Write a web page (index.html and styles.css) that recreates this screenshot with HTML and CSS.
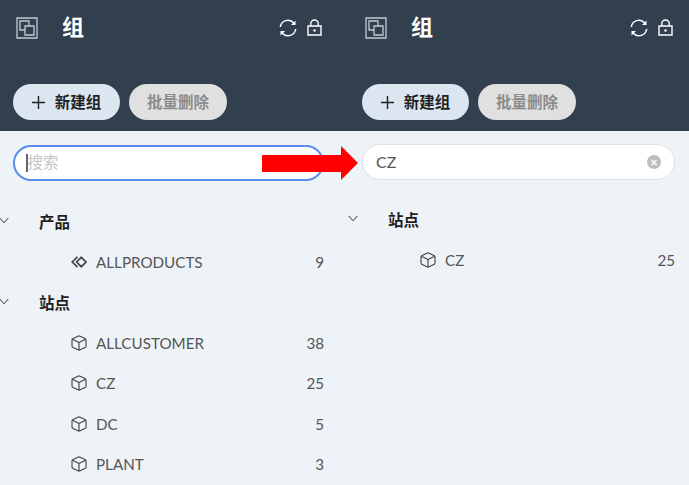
FILE: index.html
```html
<!DOCTYPE html>
<html lang="zh-cn">

<head>
    <meta charset="UTF-8">
    <title>组</title>
    <link rel="stylesheet" href="styles.css">
</head>

<body>
    <svg width="0" height="0" class="defs">
        <symbol id="box" viewBox="0 0 16 16">
            <path d="M6.900 1.200Q8 .700 9.100 1.200L13.900 3.500Q15 4 15 5.100V10.900Q15 12 13.900 12.500L9.100 14.800Q8 15.300 6.900 14.800L2.100 12.500Q1 12 1 10.900V5.100Q1 4 2.100 3.500ZM1.400 4.200 8 7.500 14.600 4.200M8 7.500V15" fill="none" stroke="currentColor" stroke-width="1.150" stroke-linejoin="round" />
        </symbol>
        <symbol id="chev" viewBox="0 0 10 7">
            <path d="M.7 1 5 5.800 9.300 1" fill="none" stroke="currentColor" stroke-width="1" />
        </symbol>
        <symbol id="logo" viewBox="0 0 22 22">
            <path d="M1 1H21V21H1Z" fill="none" stroke="currentColor" stroke-width="1.300" />
            <path d="M4 4H13V13H4Z" fill="none" stroke="currentColor" stroke-width="1.300" />
            <path d="M9 9H18V18H9Z" fill="#323f4f" stroke="currentColor" stroke-width="1.300" />
        </symbol>
        <symbol id="sync" viewBox="0 0 18 18">
            <path d="M1.300 8A7.700 7.700 0 0 1 14.800 4M16.700 10A7.700 7.700 0 0 1 3.200 14" fill="none" stroke="currentColor" stroke-width="1.500" />
            <path d="M16.500 1.500V6H12ZM1.500 16.500V12H6Z" fill="currentColor" />
        </symbol>
        <symbol id="lock" viewBox="0 0 15 17">
            <path d="M1 7H14V16H1ZM3.800 7V4.200A3.700 3.200 0 0 1 11.200 4.200V7" fill="none" stroke="currentColor" stroke-width="1.400" />
            <circle cx="7.500" cy="11.500" r="1.200" fill="currentColor" />
        </symbol>
        <symbol id="diamonds" viewBox="0 0 16 12">
            <path d="M6.500 .8 1.200 6 6.500 11.200M10.300 1.300 15 6 10.300 10.700 5.600 6Z" fill="none" stroke="currentColor" stroke-width="1.700" />
        </symbol>
        <symbol id="plus" viewBox="0 0 12 12">
            <path d="M6 0V12M0 6H12" fill="none" stroke="currentColor" stroke-width="1.300" />
        </symbol>
    </svg>

    <div class="content">
        <div class="panel panel_left">
            <div class="top">
                <div class="title_row">
                    <svg class="logo"><use href="#logo" /></svg>
                    <span class="title">组</span>
                    <svg class="sync"><use href="#sync" /></svg>
                    <svg class="lock"><use href="#lock" /></svg>
                </div>
                <div class="btn_row">
                    <button class="add_btn"><svg class="plus"><use href="#plus" /></svg>新建组</button>
                    <button class="del_btn">批量删除</button>
                </div>
            </div>
            <div class="bottom">
                <div class="search search_on">
                    <span class="caret"></span>
                    <span class="hint">搜索</span>
                </div>
                <ul class="list">
                    <li class="group">
                        <svg class="chev"><use href="#chev" /></svg>
                        <b>产品</b>
                    </li>
                    <li class="item">
                        <svg class="ico ico_small"><use href="#diamonds" /></svg>
                        <span class="name">ALLPRODUCTS</span>
                        <span class="num">9</span>
                    </li>
                    <li class="group">
                        <svg class="chev"><use href="#chev" /></svg>
                        <b>站点</b>
                    </li>
                    <li class="item">
                        <svg class="ico"><use href="#box" /></svg>
                        <span class="name">ALLCUSTOMER</span>
                        <span class="num">38</span>
                    </li>
                    <li class="item">
                        <svg class="ico"><use href="#box" /></svg>
                        <span class="name">CZ</span>
                        <span class="num">25</span>
                    </li>
                    <li class="item">
                        <svg class="ico"><use href="#box" /></svg>
                        <span class="name">DC</span>
                        <span class="num">5</span>
                    </li>
                    <li class="item">
                        <svg class="ico"><use href="#box" /></svg>
                        <span class="name">PLANT</span>
                        <span class="num">3</span>
                    </li>
                </ul>
            </div>
        </div>

        <div class="panel panel_right">
            <div class="top">
                <div class="title_row">
                    <svg class="logo"><use href="#logo" /></svg>
                    <span class="title">组</span>
                    <svg class="sync"><use href="#sync" /></svg>
                    <svg class="lock"><use href="#lock" /></svg>
                </div>
                <div class="btn_row">
                    <button class="add_btn"><svg class="plus"><use href="#plus" /></svg>新建组</button>
                    <button class="del_btn">批量删除</button>
                </div>
            </div>
            <div class="bottom">
                <div class="search">
                    <span class="value">CZ</span>
                    <span class="clear">×</span>
                </div>
                <ul class="list">
                    <li class="group">
                        <svg class="chev"><use href="#chev" /></svg>
                        <b>站点</b>
                    </li>
                    <li class="item">
                        <svg class="ico"><use href="#box" /></svg>
                        <span class="name">CZ</span>
                        <span class="num">25</span>
                    </li>
                </ul>
            </div>
        </div>

        <svg class="arrow" viewBox="0 0 97 36">
            <path d="M0 10H79V1L96 18 79 35V27H0Z" fill="#ff0000" />
        </svg>
    </div>
</body>

</html>
```

FILE: styles.css
```css
* {
    margin: 0;
    padding: 0;
    box-sizing: border-box;
    list-style: none;
}

body {
    font-family: "Lato", "Noto Sans CJK SC", sans-serif;
    background: #eef3f7;
    overflow: hidden;
}

.defs {
    display: none;
}

.content {
    position: relative;
    display: flex;
    width: 689px;
    height: 485px;
    overflow: hidden;
}

.panel {
    height: 485px;
}

.panel_left {
    width: 341px;
    --pad-left: 13px;
    --pad-right: 17px;
    --search-top: 14px;
}

.panel_right {
    width: 348px;
    --pad-left: 21px;
    --pad-right: 14px;
    --search-top: 13px;
}

.top {
    height: 131px;
    padding: 17px var(--pad-right) 0 var(--pad-left);
    background: #323f4f;
}

.title_row {
    display: flex;
    align-items: center;
    height: 21px;
    padding-left: 3px;
    color: #fff;
}

.logo {
    width: 22px;
    height: 22px;
    color: #c3cad2;
}

.title {
    flex: 1;
    margin-left: 24px;
    padding-bottom: 6px;
    font-size: 22px;
    font-weight: bold;
    line-height: 1;
    font-family: "Noto Sans CJK SC", sans-serif;
}

.sync {
    width: 18px;
    height: 18px;
}

.lock {
    width: 15px;
    height: 17px;
    margin: 0 2px 0 10px;
}

.btn_row {
    display: flex;
    gap: 9px;
    margin-top: 46px;
}

button {
    display: flex;
    align-items: center;
    justify-content: center;
    height: 36px;
    padding-bottom: 3px;
    border: 0;
    border-radius: 18px;
    font-family: "Noto Sans CJK SC", sans-serif;
    font-size: 15.500px;
    font-weight: bold;
}

.add_btn {
    width: 107px;
    background: #dbe6f0;
    color: #1f1f1f;
}

.plus {
    width: 13px;
    height: 13px;
    margin: 3px 10px 0 0;
}

.del_btn {
    width: 98px;
    background: #e0e0e0;
    color: #8c8c8c;
}

.bottom {
    padding: var(--search-top) var(--pad-right) 0 var(--pad-left);
}

.search {
    display: flex;
    align-items: center;
    height: 36px;
    padding: 0 13px;
    background: #fff;
    border: 1px solid #dcdfe3;
    border-radius: 18px;
    font-size: 16px;
    color: #555;
}

.search_on {
    border: 2px solid #5b8def;
    padding: 0 11px;
}

.caret {
    width: 1.500px;
    height: 18px;
    background: #666;
}

.hint {
    padding-bottom: 4px;
    font-size: 15.500px;
    color: #c4c4c4;
}

.value {
    flex: 1;
    padding-bottom: 2px;
}

.clear {
    width: 14px;
    height: 14px;
    margin: 0 0 1px;
    border-radius: 50%;
    background: #bdbdbd;
    color: #fff;
    font-size: 13px;
    font-weight: bold;
    line-height: 14px;
    text-align: center;
}

.list {
    margin-top: 20px;
}

.panel_right .list {
    margin-top: 19px;
}

.group {
    display: flex;
    align-items: center;
    height: 40.500px;
    margin-left: -13px;
    padding-bottom: 1px;
    color: #1f1f1f;
    font-family: "Noto Sans CJK SC", sans-serif;
    font-size: 15.500px;
}

.chev {
    width: 10px;
    height: 7px;
    margin-right: 30px;
    margin-left: -1px;
    color: #333;
}

.item {
    display: flex;
    align-items: center;
    height: 40.500px;
    padding-left: 58px;
    font-size: 15.200px;
    color: #555;
}

.ico {
    width: 16px;
    height: 16px;
    margin-right: 9px;
    color: #444;
}

.ico_small {
    height: 12px;
}

.name {
    flex: 1;
}

.arrow {
    position: absolute;
    left: 262px;
    top: 145px;
    width: 97px;
    height: 36px;
}
```
